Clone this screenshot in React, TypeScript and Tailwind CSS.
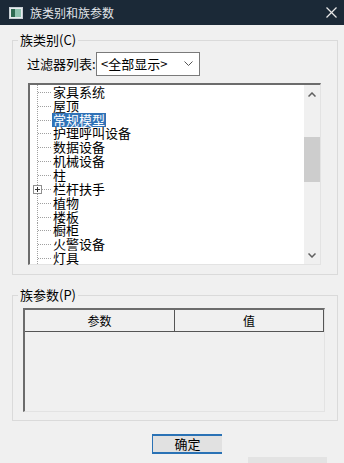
import React from 'react';

const items = [
  { name: '家具系统' },
  { name: '屋顶' },
  { name: '常规模型', selected: true },
  { name: '护理呼叫设备' },
  { name: '数据设备' },
  { name: '机械设备' },
  { name: '柱' },
  { name: '栏杆扶手', expandable: true },
  { name: '植物' },
  { name: '楼板' },
  { name: '橱柜' },
  { name: '火警设备' },
  { name: '灯具' },
];

const TreeLines: React.FC<{ expandable?: boolean }> = ({ expandable }) => (
  <svg width="22" height="14" className="shrink-0">
    <line x1="7.5" y1="0" x2="7.5" y2="14" stroke="#a0a0a0" strokeDasharray="1 1" />
    <line x1={expandable ? 12 : 8} y1="7.5" x2="22" y2="7.5" stroke="#a0a0a0" strokeDasharray="1 1" />
    {expandable && (
      <g>
        <rect x="3.5" y="3.5" width="8" height="8" fill="#fff" stroke="#8f8f8f" />
        <line x1="5" y1="7.5" x2="10" y2="7.5" stroke="#333" />
        <line x1="7.5" y1="5" x2="7.5" y2="10" stroke="#333" />
      </g>
    )}
  </svg>
);

export default function App() {
  return (
    <div className="w-[344px] h-[463px] overflow-hidden bg-[#f0f0f0] font-['Noto_Sans_CJK_SC',sans-serif] text-black">
      {/* Title bar */}
      <div className="h-[25px] bg-[#1b2937] flex items-center pl-[9px] pr-[4px]">
        <svg width="14" height="12" className="shrink-0">
          <rect x="0.5" y="0.5" width="13" height="11" fill="#e8ecef" stroke="#c8cfd4" />
          <rect x="2" y="2" width="4" height="8" fill="#2f6b52" />
          <rect x="6" y="2" width="6" height="8" fill="#8fc3b0" />
        </svg>
        <span className="ml-[7px] text-[12px] leading-[14px] text-[#e2e6ea]">族类别和族参数</span>
        <svg width="11" height="11" className="ml-auto mr-[3px]">
          <line x1="0.5" y1="0.5" x2="10.5" y2="10.5" stroke="#e8e8e8" strokeWidth="1.2" />
          <line x1="10.5" y1="0.5" x2="0.5" y2="10.5" stroke="#e8e8e8" strokeWidth="1.2" />
        </svg>
      </div>

      <div className="pl-[12px]">
        {/* Family category group */}
        <fieldset className="mt-[7px] w-[326px] border border-[#dadada] pl-[14px] pb-[9px]">
          <legend className="ml-[-9px] px-[2px] text-[13px] leading-[16px]">族类别(C)</legend>
          <div className="flex items-center mt-[4px]">
            <span className="text-[13px] leading-[16px] w-[69px]">过滤器列表:</span>
            <div className="w-[104px] h-[24px] border border-[#7a7a7a] bg-white flex items-center pl-[4px] pr-[6px]">
              <span className="text-[13px] leading-[16px]">&lt;全部显示&gt;</span>
              <svg width="9" height="6" className="ml-auto">
                <polyline points="0.5,0.5 4.5,4.5 8.5,0.5" fill="none" stroke="#555" />
              </svg>
            </div>
          </div>

          <div className="mt-[7px] ml-[1px] w-[293px] h-[182px] bg-white flex border-t-2 border-l-2 border-[#6c6c6c] border-r border-b border-r-[#e3e3e3] border-b-[#e3e3e3]">
            <div className="flex-1 flex flex-col">
              {items.map((item) => (
                <div key={item.name} className="h-[13.85px] flex items-center">
                  <TreeLines expandable={item.expandable} />
                  <span
                    className={
                      item.selected
                        ? 'px-[1px] text-[13px] leading-[14px] bg-[#3072b7] text-white'
                        : 'px-[1px] text-[13px] leading-[14px]'
                    }
                  >
                    {item.name}
                  </span>
                </div>
              ))}
            </div>
            <div className="w-[16px] bg-[#f0f0f0] flex flex-col items-center">
              <svg width="8" height="5" className="mt-[7px]">
                <polyline points="0.5,4.5 4,1 7.5,4.5" fill="none" stroke="#606060" strokeWidth="1.5" />
              </svg>
              <div className="mt-[40px] w-full h-[45px] bg-[#cdcdcd]" />
              <svg width="8" height="5" className="mt-auto mb-[6px]">
                <polyline points="0.5,0.5 4,4 7.5,0.5" fill="none" stroke="#606060" strokeWidth="1.5" />
              </svg>
            </div>
          </div>
        </fieldset>

        {/* Family parameters group */}
        <fieldset className="mt-[13px] w-[326px] border border-[#dadada] pl-[10px] pb-[8px]">
          <legend className="ml-[-5px] px-[2px] text-[13px] leading-[14px]">族参数(P)</legend>
          <div className="mt-[6px] w-[302px] h-[104px] border-t-2 border-l-2 border-[#6c6c6c] border-r border-b border-r-[#e3e3e3] border-b-[#e3e3e3]">
            <div className="grid grid-cols-[150px_1fr] h-[22px] border-b border-[#555] border-r border-r-[#555]">
              <div className="flex items-center justify-center text-[12px] border-r border-[#555]">参数</div>
              <div className="flex items-center justify-center text-[12px]">值</div>
            </div>
          </div>
        </fieldset>

        <div className="mt-[13px] ml-[140px] w-[70px] h-[20px] bg-[#e1e1e1] border-t-2 border-b-2 border-l border-[#2a72b5] flex items-center justify-center text-[13px] leading-[14px]">
          确定
        </div>
        <div className="mt-[3px] ml-[236px] w-[79px] h-[6px] bg-[#e3e3e3]" />
      </div>
    </div>
  );
}
